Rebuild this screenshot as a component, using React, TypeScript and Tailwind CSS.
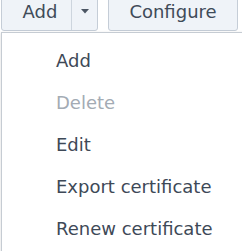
import React from 'react';

const items = [
  { label: 'Add', disabled: false },
  { label: 'Delete', disabled: true },
  { label: 'Edit', disabled: false },
  { label: 'Export certificate', disabled: false },
  { label: 'Renew certificate', disabled: false },
];

export default function App() {
  return (
    <div
      className="relative h-[251px] w-[242px] overflow-hidden bg-white"
      style={{ fontFamily: '"DejaVu Sans", Verdana, sans-serif' }}
    >
      <div className="-mt-[9px] flex h-[40px] items-stretch pl-px">
        <div className="flex w-[97px] rounded-b-[3px] border border-[#c5cdd7] bg-[#eff3f8] text-[18px] text-[#3f4b59]">
          <div className="flex w-[69px] items-center justify-center pl-[7px]">Add</div>
          <div className="flex flex-1 items-center justify-center border-l border-[#cdd5de]">
            <svg width="8" height="5" viewBox="0 0 8 5">
              <path d="M0 0h8L4 4.5z" fill="#4b5563" />
            </svg>
          </div>
        </div>
        <div className="ml-[10px] flex w-[130px] items-center justify-center rounded-b-[3px] border border-[#c5cdd7] bg-[#eff3f8] text-[18px] text-[#3f4b59]">
          Configure
        </div>
      </div>
      <div className="absolute left-px top-[32px] h-[240px] w-[260px] border border-[#c6ccd3] bg-white pt-[6px] shadow-[0_1px_3px_rgba(0,0,0,0.15)]">
        {items.map((item) => (
          <div
            key={item.label}
            className={`flex h-[42px] items-center pl-[54px] text-[18px] ${
              item.disabled ? 'text-[#a3abb4]' : 'text-[#3e4957]'
            }`}
          >
            {item.label}
          </div>
        ))}
      </div>
    </div>
  );
}
